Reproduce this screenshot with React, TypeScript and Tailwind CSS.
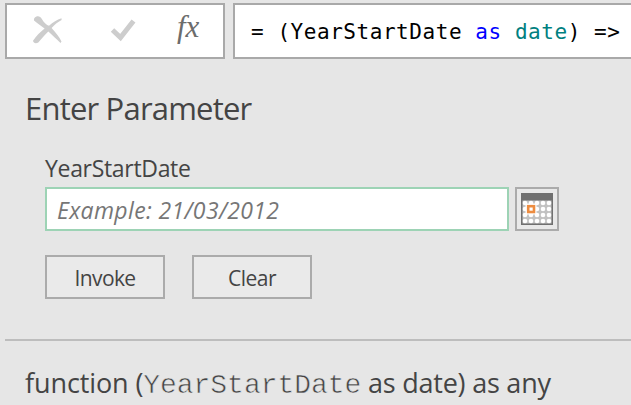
import React from "react";

const ui = "font-['Open_Sans','Noto_Sans',sans-serif]";

function Toolbar() {
  return (
    <div className="flex h-14 w-[220px] shrink-0 items-center border-2 border-[#a9a9a9] bg-white">
      <svg className="mb-[3px] ml-[26px] h-7 w-[30px]" viewBox="0 0 30 28" fill="#cdcdcd">
        <path d="M3 0.8C5.5-.2 7.200.5 9 3.200 11.200 6.800 13.500 8.900 16 9.800 20 6.100 24 3.500 28.500 2.200L28.600 4C24.700 6 21.400 8.900 18.600 12.100 22.500 16.200 26 20.700 28.500 25.500L27.500 27C23.500 23.300 19.300 19.100 15.300 15.600 11.500 19.200 8.500 22.900 5.300 26.500 3 27.800.3 27.200 0 24.800 3.300 19.600 7.300 16 11.600 12.400 8 9.500 4.200 7 1 4.400.7 2.800 1.500 1.500 3 .8Z" />
      </svg>
      <svg className="mb-[3px] ml-[47px] h-6 w-[26px]" viewBox="0 0 26 24" fill="none" stroke="#cdcdcd" strokeWidth="5">
        <path d="M2.500 12 10.500 19.500 23.500 3" />
      </svg>
      <span className="ml-[41px] mt-[-8px] font-['Liberation_Serif',serif] text-[31px] italic leading-8 text-[#6c6c6c]">fx</span>
    </div>
  );
}

function CalendarIcon() {
  return (
    <svg width="32" height="32" viewBox="0 0 32 32">
      <rect width="32" height="32" fill="#707070" />
      <rect x="1.500" y="7.500" width="29" height="23" fill="#c2c2c2" />
      <g fill="#fff">
        {[10, 16, 22, 28].map((y) =>
          [4, 10, 16, 22, 28].map((x) => (
            <circle key={`${x}-${y}`} cx={x} cy={y} r="2.300" />
          )),
        )}
      </g>
      <rect x="4.500" y="10.500" width="11" height="11" fill="#fff" />
      <rect x="7.200" y="13.200" width="5.800" height="5.800" fill="#fff" stroke="#ed8c40" strokeWidth="2.600" />
    </svg>
  );
}

export default function App() {
  return (
    <div className={`h-[405px] w-[631px] overflow-hidden bg-[#e6e6e6] pl-[5px] pt-[3px] text-[#444] ${ui}`}>
      <div className="flex gap-2">
        <Toolbar />
        <div className="flex h-14 grow items-center whitespace-pre border-2 border-r-0 border-[#a9a9a9] bg-white pl-4 pt-[3px] font-['DejaVu_Sans_Mono',monospace] text-[21px] tracking-[0.55px] text-black">
          <span>= (YearStartDate <span className="text-[#0000ff]">as</span> <span className="text-[#008080]">date</span>) =&gt;</span>
        </div>
      </div>
      <h1 className="ml-5 mt-[29px] h-10 whitespace-nowrap text-[31px] leading-10 tracking-[-0.8px]">Enter Parameter</h1>
      <div className="ml-10 mt-6 h-[33px] whitespace-nowrap text-[23px] leading-8 tracking-[-0.32px]">YearStartDate</div>
      <div className="ml-10 mt-[2px] flex gap-[6px]">
        <div className="flex h-11 w-[464px] items-center border-2 border-[#9dd3b5] bg-white pl-[10px] pt-[2px] text-[23px] italic tracking-[0.35px] text-[#767676]">
          <span className="whitespace-nowrap">Example: 21/03/2012</span>
        </div>
        <button className="flex size-11 items-center justify-center border-2 border-[#ababab] bg-[#e9e9e9]">
          <CalendarIcon />
        </button>
      </div>
      <div className="ml-10 mt-6 flex gap-[27px]">
        <button className="h-11 w-[120px] border-2 border-[#ababab] bg-[#eaeaea] pt-[3px] text-[21px] tracking-[-0.6px]">Invoke</button>
        <button className="h-11 w-[120px] border-2 border-[#ababab] bg-[#eaeaea] pt-[3px] text-[21px] tracking-[-0.5px]">Clear</button>
      </div>
      <div className="mt-10 h-0.5 bg-[#bdbdbd]" />
      <div className="ml-5 mt-[22px] flex h-10 items-baseline whitespace-pre text-[27px] leading-10">
        <span className="tracking-[-0.1px]">function (</span>
        <span className="font-['Courier_New','Liberation_Mono',monospace] text-[28px] tracking-[-0.05px] [-webkit-text-stroke:0.6px_#e6e6e6]">YearStartDate</span>
        <span className="tracking-[-0.22px]"> as date) as any</span>
      </div>
    </div>
  );
}
